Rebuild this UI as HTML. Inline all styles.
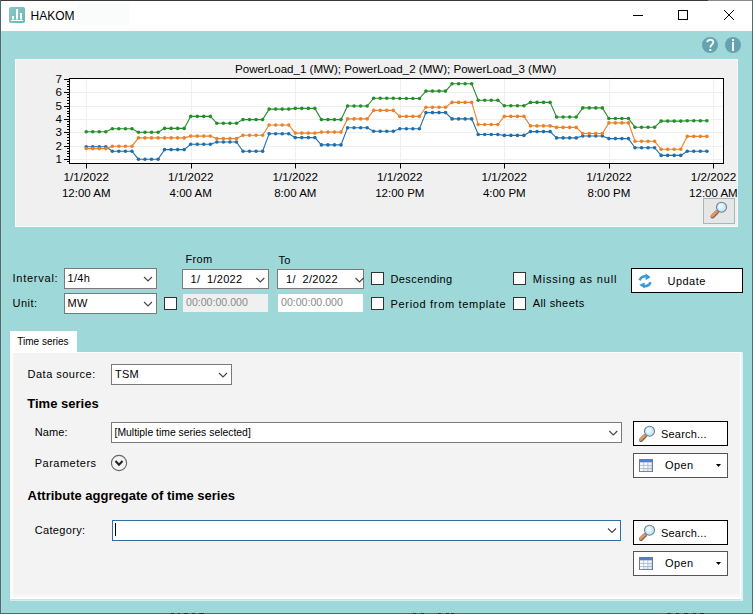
<!DOCTYPE html>
<html><head><meta charset="utf-8"><style>
html,body{margin:0;padding:0;width:753px;height:614px;overflow:hidden;background:#9fd8d8}
svg{position:absolute;left:0;top:0;font-family:"Liberation Sans",sans-serif} text{white-space:pre}
</style></head><body>
<svg width="753" height="614" viewBox="0 0 753 614">
<!-- body teal -->
<rect x="0" y="0" width="753" height="614" fill="#9fd8d8"/>
<!-- title bar -->
<rect x="0" y="0" width="753" height="31" fill="#fff"/>
<rect x="0" y="0" width="708" height="1" fill="#3a3a3a"/>
<rect x="708" y="0" width="45" height="1" fill="#8a8a8a"/>
<rect x="0" y="0" width="1" height="614" fill="#4a6a6e"/>
<rect x="1" y="31" width="1" height="582" fill="#acdcdc"/>
<rect x="752" y="0" width="1" height="614" fill="#5a6b6b"/>
<rect x="0" y="613" width="753" height="1" fill="#4a6868"/>
<g fill="#1a2a2a"><rect x="171" y="613" width="3" height="1"/><rect x="178" y="613" width="2" height="1"/><rect x="184" y="613" width="4" height="1"/><rect x="192" y="613" width="3" height="1"/><rect x="199" y="613" width="5" height="1"/>
<rect x="413" y="613" width="3" height="1"/><rect x="421" y="613" width="3" height="1"/><rect x="438" y="613" width="3" height="1"/><rect x="446" y="613" width="3" height="1"/><rect x="451" y="613" width="3" height="1"/>
<rect x="667" y="613" width="4" height="1"/><rect x="676" y="613" width="3" height="1"/><rect x="684" y="613" width="4" height="1"/><rect x="693" y="613" width="3" height="1"/><rect x="700" y="613" width="4" height="1"/></g>
<!-- app icon -->
<defs><linearGradient id="ig" x1="0" y1="0" x2="1" y2="1"><stop offset="0" stop-color="#8cc8c8"/><stop offset="1" stop-color="#6db5b5"/></linearGradient></defs>
<rect x="9" y="7" width="16" height="16" rx="2" fill="url(#ig)"/>
<rect x="12" y="16" width="2" height="3.5" fill="#fff"/>
<rect x="16" y="9" width="2" height="10.5" fill="#fff"/>
<rect x="20" y="13" width="2" height="6.5" fill="#fff"/>
<rect x="11" y="20" width="12" height="1" fill="#fff"/>
<rect x="77" y="3" width="52" height="22" fill="#fafbfb"/>
<text x="30.5" y="19.7" font-size="12" fill="#000">HAKOM</text>
<!-- window controls -->
<rect x="633" y="15" width="10" height="1" fill="#000"/>
<rect x="678.5" y="10.5" width="9" height="9" fill="none" stroke="#000" stroke-width="1"/>
<path d="M724,10 L734,20 M734,10 L724,20" stroke="#000" stroke-width="1"/>
<!-- help / info -->
<circle cx="710" cy="45" r="8" fill="#64a2b0"/>
<path d="M707.3,42.3 C707.3,38.9 713.3,38.9 713.3,42.3 C713.3,44.6 710.3,44.6 710.3,47.6" fill="none" stroke="#eef8fb" stroke-width="1.9"/>
<rect x="709.3" y="49" width="2" height="2" fill="#eef8fb"/>
<circle cx="733" cy="45" r="8" fill="#64a2b0"/>
<rect x="732" y="39" width="2" height="2" fill="#eef8fb"/>
<rect x="732" y="42" width="2" height="9" fill="#eef8fb"/>
<!-- chart panel -->
<rect x="15" y="59" width="723" height="168" fill="#f8fbfb"/>
<rect x="16" y="60" width="721" height="166" fill="#f0f0f0"/>
<text x="235" y="73" font-size="11.57" fill="#000">PowerLoad_1 (MW); PowerLoad_2 (MW); PowerLoad_3 (MW)</text>
<rect x="70" y="79" width="653" height="84" fill="#fff"/>
<line x1="70" x2="723" y1="159.5" y2="159.5" stroke="#efefef" stroke-width="1"/>
<line x1="70" x2="723" y1="146.5" y2="146.5" stroke="#efefef" stroke-width="1"/>
<line x1="70" x2="723" y1="132.5" y2="132.5" stroke="#efefef" stroke-width="1"/>
<line x1="70" x2="723" y1="119.5" y2="119.5" stroke="#efefef" stroke-width="1"/>
<line x1="70" x2="723" y1="106.5" y2="106.5" stroke="#efefef" stroke-width="1"/>
<line x1="70" x2="723" y1="92.5" y2="92.5" stroke="#efefef" stroke-width="1"/>
<line x1="86.5" x2="86.5" y1="79" y2="163" stroke="#efefef" stroke-width="1"/>
<line x1="191.5" x2="191.5" y1="79" y2="163" stroke="#efefef" stroke-width="1"/>
<line x1="295.5" x2="295.5" y1="79" y2="163" stroke="#efefef" stroke-width="1"/>
<line x1="400.5" x2="400.5" y1="79" y2="163" stroke="#efefef" stroke-width="1"/>
<line x1="504.5" x2="504.5" y1="79" y2="163" stroke="#efefef" stroke-width="1"/>
<line x1="609.5" x2="609.5" y1="79" y2="163" stroke="#efefef" stroke-width="1"/>
<line x1="713.5" x2="713.5" y1="79" y2="163" stroke="#efefef" stroke-width="1"/>
<path d="M86.20,146.70 L92.73,146.70 L99.27,146.70 L105.80,146.70 L112.33,151.30 L118.87,151.30 L125.40,151.30 L131.93,151.30 L138.47,159.20 L145.00,159.20 L151.53,159.20 L158.07,159.20 L164.60,149.60 L171.13,149.60 L177.67,149.60 L184.20,149.60 L190.73,144.20 L197.27,144.20 L203.80,144.20 L210.33,144.20 L216.87,142.00 L223.40,142.00 L229.93,142.00 L236.47,142.00 L243.00,151.30 L249.53,151.30 L256.07,151.30 L262.60,151.30 L269.13,133.80 L275.67,133.80 L282.20,133.80 L288.73,133.80 L295.27,137.60 L301.80,137.60 L308.33,137.60 L314.87,137.60 L321.40,144.90 L327.93,144.90 L334.47,144.90 L341.00,144.90 L347.53,127.70 L354.07,127.70 L360.60,127.70 L367.13,127.70 L373.67,131.30 L380.20,131.30 L386.73,131.30 L393.27,131.30 L399.80,128.80 L406.33,128.80 L412.87,128.80 L419.40,128.80 L425.93,112.60 L432.47,112.60 L439.00,112.60 L445.53,112.60 L452.07,118.90 L458.60,118.90 L465.13,118.90 L471.67,118.90 L478.20,134.50 L484.73,134.50 L491.27,134.50 L497.80,134.50 L504.33,135.40 L510.87,135.40 L517.40,135.40 L523.93,135.40 L530.47,131.60 L537.00,131.60 L543.53,131.60 L550.07,131.60 L556.60,137.90 L563.13,137.90 L569.67,137.90 L576.20,137.90 L582.73,136.00 L589.27,136.00 L595.80,136.00 L602.33,136.00 L608.87,138.60 L615.40,138.60 L621.93,138.60 L628.47,138.60 L635.00,147.70 L641.53,147.70 L648.07,147.70 L654.60,147.70 L661.13,155.40 L667.67,155.40 L674.20,155.40 L680.73,155.40 L687.27,151.30 L693.80,151.30 L700.33,151.30 L706.87,151.30" fill="none" stroke="#1f6fad" stroke-width="1.1"/><circle cx="86.20" cy="146.70" r="1.8" fill="#1f6fad"/><circle cx="92.73" cy="146.70" r="1.8" fill="#1f6fad"/><circle cx="99.27" cy="146.70" r="1.8" fill="#1f6fad"/><circle cx="105.80" cy="146.70" r="1.8" fill="#1f6fad"/><circle cx="112.33" cy="151.30" r="1.8" fill="#1f6fad"/><circle cx="118.87" cy="151.30" r="1.8" fill="#1f6fad"/><circle cx="125.40" cy="151.30" r="1.8" fill="#1f6fad"/><circle cx="131.93" cy="151.30" r="1.8" fill="#1f6fad"/><circle cx="138.47" cy="159.20" r="1.8" fill="#1f6fad"/><circle cx="145.00" cy="159.20" r="1.8" fill="#1f6fad"/><circle cx="151.53" cy="159.20" r="1.8" fill="#1f6fad"/><circle cx="158.07" cy="159.20" r="1.8" fill="#1f6fad"/><circle cx="164.60" cy="149.60" r="1.8" fill="#1f6fad"/><circle cx="171.13" cy="149.60" r="1.8" fill="#1f6fad"/><circle cx="177.67" cy="149.60" r="1.8" fill="#1f6fad"/><circle cx="184.20" cy="149.60" r="1.8" fill="#1f6fad"/><circle cx="190.73" cy="144.20" r="1.8" fill="#1f6fad"/><circle cx="197.27" cy="144.20" r="1.8" fill="#1f6fad"/><circle cx="203.80" cy="144.20" r="1.8" fill="#1f6fad"/><circle cx="210.33" cy="144.20" r="1.8" fill="#1f6fad"/><circle cx="216.87" cy="142.00" r="1.8" fill="#1f6fad"/><circle cx="223.40" cy="142.00" r="1.8" fill="#1f6fad"/><circle cx="229.93" cy="142.00" r="1.8" fill="#1f6fad"/><circle cx="236.47" cy="142.00" r="1.8" fill="#1f6fad"/><circle cx="243.00" cy="151.30" r="1.8" fill="#1f6fad"/><circle cx="249.53" cy="151.30" r="1.8" fill="#1f6fad"/><circle cx="256.07" cy="151.30" r="1.8" fill="#1f6fad"/><circle cx="262.60" cy="151.30" r="1.8" fill="#1f6fad"/><circle cx="269.13" cy="133.80" r="1.8" fill="#1f6fad"/><circle cx="275.67" cy="133.80" r="1.8" fill="#1f6fad"/><circle cx="282.20" cy="133.80" r="1.8" fill="#1f6fad"/><circle cx="288.73" cy="133.80" r="1.8" fill="#1f6fad"/><circle cx="295.27" cy="137.60" r="1.8" fill="#1f6fad"/><circle cx="301.80" cy="137.60" r="1.8" fill="#1f6fad"/><circle cx="308.33" cy="137.60" r="1.8" fill="#1f6fad"/><circle cx="314.87" cy="137.60" r="1.8" fill="#1f6fad"/><circle cx="321.40" cy="144.90" r="1.8" fill="#1f6fad"/><circle cx="327.93" cy="144.90" r="1.8" fill="#1f6fad"/><circle cx="334.47" cy="144.90" r="1.8" fill="#1f6fad"/><circle cx="341.00" cy="144.90" r="1.8" fill="#1f6fad"/><circle cx="347.53" cy="127.70" r="1.8" fill="#1f6fad"/><circle cx="354.07" cy="127.70" r="1.8" fill="#1f6fad"/><circle cx="360.60" cy="127.70" r="1.8" fill="#1f6fad"/><circle cx="367.13" cy="127.70" r="1.8" fill="#1f6fad"/><circle cx="373.67" cy="131.30" r="1.8" fill="#1f6fad"/><circle cx="380.20" cy="131.30" r="1.8" fill="#1f6fad"/><circle cx="386.73" cy="131.30" r="1.8" fill="#1f6fad"/><circle cx="393.27" cy="131.30" r="1.8" fill="#1f6fad"/><circle cx="399.80" cy="128.80" r="1.8" fill="#1f6fad"/><circle cx="406.33" cy="128.80" r="1.8" fill="#1f6fad"/><circle cx="412.87" cy="128.80" r="1.8" fill="#1f6fad"/><circle cx="419.40" cy="128.80" r="1.8" fill="#1f6fad"/><circle cx="425.93" cy="112.60" r="1.8" fill="#1f6fad"/><circle cx="432.47" cy="112.60" r="1.8" fill="#1f6fad"/><circle cx="439.00" cy="112.60" r="1.8" fill="#1f6fad"/><circle cx="445.53" cy="112.60" r="1.8" fill="#1f6fad"/><circle cx="452.07" cy="118.90" r="1.8" fill="#1f6fad"/><circle cx="458.60" cy="118.90" r="1.8" fill="#1f6fad"/><circle cx="465.13" cy="118.90" r="1.8" fill="#1f6fad"/><circle cx="471.67" cy="118.90" r="1.8" fill="#1f6fad"/><circle cx="478.20" cy="134.50" r="1.8" fill="#1f6fad"/><circle cx="484.73" cy="134.50" r="1.8" fill="#1f6fad"/><circle cx="491.27" cy="134.50" r="1.8" fill="#1f6fad"/><circle cx="497.80" cy="134.50" r="1.8" fill="#1f6fad"/><circle cx="504.33" cy="135.40" r="1.8" fill="#1f6fad"/><circle cx="510.87" cy="135.40" r="1.8" fill="#1f6fad"/><circle cx="517.40" cy="135.40" r="1.8" fill="#1f6fad"/><circle cx="523.93" cy="135.40" r="1.8" fill="#1f6fad"/><circle cx="530.47" cy="131.60" r="1.8" fill="#1f6fad"/><circle cx="537.00" cy="131.60" r="1.8" fill="#1f6fad"/><circle cx="543.53" cy="131.60" r="1.8" fill="#1f6fad"/><circle cx="550.07" cy="131.60" r="1.8" fill="#1f6fad"/><circle cx="556.60" cy="137.90" r="1.8" fill="#1f6fad"/><circle cx="563.13" cy="137.90" r="1.8" fill="#1f6fad"/><circle cx="569.67" cy="137.90" r="1.8" fill="#1f6fad"/><circle cx="576.20" cy="137.90" r="1.8" fill="#1f6fad"/><circle cx="582.73" cy="136.00" r="1.8" fill="#1f6fad"/><circle cx="589.27" cy="136.00" r="1.8" fill="#1f6fad"/><circle cx="595.80" cy="136.00" r="1.8" fill="#1f6fad"/><circle cx="602.33" cy="136.00" r="1.8" fill="#1f6fad"/><circle cx="608.87" cy="138.60" r="1.8" fill="#1f6fad"/><circle cx="615.40" cy="138.60" r="1.8" fill="#1f6fad"/><circle cx="621.93" cy="138.60" r="1.8" fill="#1f6fad"/><circle cx="628.47" cy="138.60" r="1.8" fill="#1f6fad"/><circle cx="635.00" cy="147.70" r="1.8" fill="#1f6fad"/><circle cx="641.53" cy="147.70" r="1.8" fill="#1f6fad"/><circle cx="648.07" cy="147.70" r="1.8" fill="#1f6fad"/><circle cx="654.60" cy="147.70" r="1.8" fill="#1f6fad"/><circle cx="661.13" cy="155.40" r="1.8" fill="#1f6fad"/><circle cx="667.67" cy="155.40" r="1.8" fill="#1f6fad"/><circle cx="674.20" cy="155.40" r="1.8" fill="#1f6fad"/><circle cx="680.73" cy="155.40" r="1.8" fill="#1f6fad"/><circle cx="687.27" cy="151.30" r="1.8" fill="#1f6fad"/><circle cx="693.80" cy="151.30" r="1.8" fill="#1f6fad"/><circle cx="700.33" cy="151.30" r="1.8" fill="#1f6fad"/><circle cx="706.87" cy="151.30" r="1.8" fill="#1f6fad"/>
<path d="M86.20,148.60 L92.73,148.60 L99.27,148.60 L105.80,148.60 L112.33,146.20 L118.87,146.20 L125.40,146.20 L131.93,146.20 L138.47,137.90 L145.00,137.90 L151.53,137.90 L158.07,137.90 L164.60,137.90 L171.13,137.90 L177.67,137.90 L184.20,137.90 L190.73,136.10 L197.27,136.10 L203.80,136.10 L210.33,136.10 L216.87,138.60 L223.40,138.60 L229.93,138.60 L236.47,138.60 L243.00,135.30 L249.53,135.30 L256.07,135.30 L262.60,135.30 L269.13,125.00 L275.67,125.00 L282.20,125.00 L288.73,125.00 L295.27,133.10 L301.80,133.10 L308.33,133.10 L314.87,133.10 L321.40,132.10 L327.93,132.10 L334.47,132.10 L341.00,132.10 L347.53,118.90 L354.07,118.90 L360.60,118.90 L367.13,118.90 L373.67,110.40 L380.20,110.40 L386.73,110.40 L393.27,110.40 L399.80,116.40 L406.33,116.40 L412.87,116.40 L419.40,116.40 L425.93,107.20 L432.47,107.20 L439.00,107.20 L445.53,107.20 L452.07,102.40 L458.60,102.40 L465.13,102.40 L471.67,102.40 L478.20,124.50 L484.73,124.50 L491.27,124.50 L497.80,124.50 L504.33,116.40 L510.87,116.40 L517.40,116.40 L523.93,116.40 L530.47,125.90 L537.00,125.90 L543.53,125.90 L550.07,125.90 L556.60,127.40 L563.13,127.40 L569.67,127.40 L576.20,127.40 L582.73,133.50 L589.27,133.50 L595.80,133.50 L602.33,133.50 L608.87,122.90 L615.40,122.90 L621.93,122.90 L628.47,122.90 L635.00,141.30 L641.53,141.30 L648.07,141.30 L654.60,141.30 L661.13,149.30 L667.67,149.30 L674.20,149.30 L680.73,149.30 L687.27,136.40 L693.80,136.40 L700.33,136.40 L706.87,136.40" fill="none" stroke="#ea822a" stroke-width="1.1"/><circle cx="86.20" cy="148.60" r="1.8" fill="#ea822a"/><circle cx="92.73" cy="148.60" r="1.8" fill="#ea822a"/><circle cx="99.27" cy="148.60" r="1.8" fill="#ea822a"/><circle cx="105.80" cy="148.60" r="1.8" fill="#ea822a"/><circle cx="112.33" cy="146.20" r="1.8" fill="#ea822a"/><circle cx="118.87" cy="146.20" r="1.8" fill="#ea822a"/><circle cx="125.40" cy="146.20" r="1.8" fill="#ea822a"/><circle cx="131.93" cy="146.20" r="1.8" fill="#ea822a"/><circle cx="138.47" cy="137.90" r="1.8" fill="#ea822a"/><circle cx="145.00" cy="137.90" r="1.8" fill="#ea822a"/><circle cx="151.53" cy="137.90" r="1.8" fill="#ea822a"/><circle cx="158.07" cy="137.90" r="1.8" fill="#ea822a"/><circle cx="164.60" cy="137.90" r="1.8" fill="#ea822a"/><circle cx="171.13" cy="137.90" r="1.8" fill="#ea822a"/><circle cx="177.67" cy="137.90" r="1.8" fill="#ea822a"/><circle cx="184.20" cy="137.90" r="1.8" fill="#ea822a"/><circle cx="190.73" cy="136.10" r="1.8" fill="#ea822a"/><circle cx="197.27" cy="136.10" r="1.8" fill="#ea822a"/><circle cx="203.80" cy="136.10" r="1.8" fill="#ea822a"/><circle cx="210.33" cy="136.10" r="1.8" fill="#ea822a"/><circle cx="216.87" cy="138.60" r="1.8" fill="#ea822a"/><circle cx="223.40" cy="138.60" r="1.8" fill="#ea822a"/><circle cx="229.93" cy="138.60" r="1.8" fill="#ea822a"/><circle cx="236.47" cy="138.60" r="1.8" fill="#ea822a"/><circle cx="243.00" cy="135.30" r="1.8" fill="#ea822a"/><circle cx="249.53" cy="135.30" r="1.8" fill="#ea822a"/><circle cx="256.07" cy="135.30" r="1.8" fill="#ea822a"/><circle cx="262.60" cy="135.30" r="1.8" fill="#ea822a"/><circle cx="269.13" cy="125.00" r="1.8" fill="#ea822a"/><circle cx="275.67" cy="125.00" r="1.8" fill="#ea822a"/><circle cx="282.20" cy="125.00" r="1.8" fill="#ea822a"/><circle cx="288.73" cy="125.00" r="1.8" fill="#ea822a"/><circle cx="295.27" cy="133.10" r="1.8" fill="#ea822a"/><circle cx="301.80" cy="133.10" r="1.8" fill="#ea822a"/><circle cx="308.33" cy="133.10" r="1.8" fill="#ea822a"/><circle cx="314.87" cy="133.10" r="1.8" fill="#ea822a"/><circle cx="321.40" cy="132.10" r="1.8" fill="#ea822a"/><circle cx="327.93" cy="132.10" r="1.8" fill="#ea822a"/><circle cx="334.47" cy="132.10" r="1.8" fill="#ea822a"/><circle cx="341.00" cy="132.10" r="1.8" fill="#ea822a"/><circle cx="347.53" cy="118.90" r="1.8" fill="#ea822a"/><circle cx="354.07" cy="118.90" r="1.8" fill="#ea822a"/><circle cx="360.60" cy="118.90" r="1.8" fill="#ea822a"/><circle cx="367.13" cy="118.90" r="1.8" fill="#ea822a"/><circle cx="373.67" cy="110.40" r="1.8" fill="#ea822a"/><circle cx="380.20" cy="110.40" r="1.8" fill="#ea822a"/><circle cx="386.73" cy="110.40" r="1.8" fill="#ea822a"/><circle cx="393.27" cy="110.40" r="1.8" fill="#ea822a"/><circle cx="399.80" cy="116.40" r="1.8" fill="#ea822a"/><circle cx="406.33" cy="116.40" r="1.8" fill="#ea822a"/><circle cx="412.87" cy="116.40" r="1.8" fill="#ea822a"/><circle cx="419.40" cy="116.40" r="1.8" fill="#ea822a"/><circle cx="425.93" cy="107.20" r="1.8" fill="#ea822a"/><circle cx="432.47" cy="107.20" r="1.8" fill="#ea822a"/><circle cx="439.00" cy="107.20" r="1.8" fill="#ea822a"/><circle cx="445.53" cy="107.20" r="1.8" fill="#ea822a"/><circle cx="452.07" cy="102.40" r="1.8" fill="#ea822a"/><circle cx="458.60" cy="102.40" r="1.8" fill="#ea822a"/><circle cx="465.13" cy="102.40" r="1.8" fill="#ea822a"/><circle cx="471.67" cy="102.40" r="1.8" fill="#ea822a"/><circle cx="478.20" cy="124.50" r="1.8" fill="#ea822a"/><circle cx="484.73" cy="124.50" r="1.8" fill="#ea822a"/><circle cx="491.27" cy="124.50" r="1.8" fill="#ea822a"/><circle cx="497.80" cy="124.50" r="1.8" fill="#ea822a"/><circle cx="504.33" cy="116.40" r="1.8" fill="#ea822a"/><circle cx="510.87" cy="116.40" r="1.8" fill="#ea822a"/><circle cx="517.40" cy="116.40" r="1.8" fill="#ea822a"/><circle cx="523.93" cy="116.40" r="1.8" fill="#ea822a"/><circle cx="530.47" cy="125.90" r="1.8" fill="#ea822a"/><circle cx="537.00" cy="125.90" r="1.8" fill="#ea822a"/><circle cx="543.53" cy="125.90" r="1.8" fill="#ea822a"/><circle cx="550.07" cy="125.90" r="1.8" fill="#ea822a"/><circle cx="556.60" cy="127.40" r="1.8" fill="#ea822a"/><circle cx="563.13" cy="127.40" r="1.8" fill="#ea822a"/><circle cx="569.67" cy="127.40" r="1.8" fill="#ea822a"/><circle cx="576.20" cy="127.40" r="1.8" fill="#ea822a"/><circle cx="582.73" cy="133.50" r="1.8" fill="#ea822a"/><circle cx="589.27" cy="133.50" r="1.8" fill="#ea822a"/><circle cx="595.80" cy="133.50" r="1.8" fill="#ea822a"/><circle cx="602.33" cy="133.50" r="1.8" fill="#ea822a"/><circle cx="608.87" cy="122.90" r="1.8" fill="#ea822a"/><circle cx="615.40" cy="122.90" r="1.8" fill="#ea822a"/><circle cx="621.93" cy="122.90" r="1.8" fill="#ea822a"/><circle cx="628.47" cy="122.90" r="1.8" fill="#ea822a"/><circle cx="635.00" cy="141.30" r="1.8" fill="#ea822a"/><circle cx="641.53" cy="141.30" r="1.8" fill="#ea822a"/><circle cx="648.07" cy="141.30" r="1.8" fill="#ea822a"/><circle cx="654.60" cy="141.30" r="1.8" fill="#ea822a"/><circle cx="661.13" cy="149.30" r="1.8" fill="#ea822a"/><circle cx="667.67" cy="149.30" r="1.8" fill="#ea822a"/><circle cx="674.20" cy="149.30" r="1.8" fill="#ea822a"/><circle cx="680.73" cy="149.30" r="1.8" fill="#ea822a"/><circle cx="687.27" cy="136.40" r="1.8" fill="#ea822a"/><circle cx="693.80" cy="136.40" r="1.8" fill="#ea822a"/><circle cx="700.33" cy="136.40" r="1.8" fill="#ea822a"/><circle cx="706.87" cy="136.40" r="1.8" fill="#ea822a"/>
<path d="M86.20,131.80 L92.73,131.80 L99.27,131.80 L105.80,131.80 L112.33,128.70 L118.87,128.70 L125.40,128.70 L131.93,128.70 L138.47,132.30 L145.00,132.30 L151.53,132.30 L158.07,132.30 L164.60,128.40 L171.13,128.40 L177.67,128.40 L184.20,128.40 L190.73,116.40 L197.27,116.40 L203.80,116.40 L210.33,116.40 L216.87,123.30 L223.40,123.30 L229.93,123.30 L236.47,123.30 L243.00,119.60 L249.53,119.60 L256.07,119.60 L262.60,119.60 L269.13,109.10 L275.67,109.10 L282.20,109.10 L288.73,109.10 L295.27,108.40 L301.80,108.40 L308.33,108.40 L314.87,108.40 L321.40,119.60 L327.93,119.60 L334.47,119.60 L341.00,119.60 L347.53,106.00 L354.07,106.00 L360.60,106.00 L367.13,106.00 L373.67,98.20 L380.20,98.20 L386.73,98.20 L393.27,98.20 L399.80,98.50 L406.33,98.50 L412.87,98.50 L419.40,98.50 L425.93,91.10 L432.47,91.10 L439.00,91.10 L445.53,91.10 L452.07,83.80 L458.60,83.80 L465.13,83.80 L471.67,83.80 L478.20,100.20 L484.73,100.20 L491.27,100.20 L497.80,100.20 L504.33,105.80 L510.87,105.80 L517.40,105.80 L523.93,105.80 L530.47,102.40 L537.00,102.40 L543.53,102.40 L550.07,102.40 L556.60,117.00 L563.13,117.00 L569.67,117.00 L576.20,117.00 L582.73,107.90 L589.27,107.90 L595.80,107.90 L602.33,107.90 L608.87,118.50 L615.40,118.50 L621.93,118.50 L628.47,118.50 L635.00,127.20 L641.53,127.20 L648.07,127.20 L654.60,127.20 L661.13,121.10 L667.67,121.10 L674.20,121.10 L680.73,121.10 L687.27,120.80 L693.80,120.80 L700.33,120.80 L706.87,120.80" fill="none" stroke="#248f2a" stroke-width="1.1"/><circle cx="86.20" cy="131.80" r="1.8" fill="#248f2a"/><circle cx="92.73" cy="131.80" r="1.8" fill="#248f2a"/><circle cx="99.27" cy="131.80" r="1.8" fill="#248f2a"/><circle cx="105.80" cy="131.80" r="1.8" fill="#248f2a"/><circle cx="112.33" cy="128.70" r="1.8" fill="#248f2a"/><circle cx="118.87" cy="128.70" r="1.8" fill="#248f2a"/><circle cx="125.40" cy="128.70" r="1.8" fill="#248f2a"/><circle cx="131.93" cy="128.70" r="1.8" fill="#248f2a"/><circle cx="138.47" cy="132.30" r="1.8" fill="#248f2a"/><circle cx="145.00" cy="132.30" r="1.8" fill="#248f2a"/><circle cx="151.53" cy="132.30" r="1.8" fill="#248f2a"/><circle cx="158.07" cy="132.30" r="1.8" fill="#248f2a"/><circle cx="164.60" cy="128.40" r="1.8" fill="#248f2a"/><circle cx="171.13" cy="128.40" r="1.8" fill="#248f2a"/><circle cx="177.67" cy="128.40" r="1.8" fill="#248f2a"/><circle cx="184.20" cy="128.40" r="1.8" fill="#248f2a"/><circle cx="190.73" cy="116.40" r="1.8" fill="#248f2a"/><circle cx="197.27" cy="116.40" r="1.8" fill="#248f2a"/><circle cx="203.80" cy="116.40" r="1.8" fill="#248f2a"/><circle cx="210.33" cy="116.40" r="1.8" fill="#248f2a"/><circle cx="216.87" cy="123.30" r="1.8" fill="#248f2a"/><circle cx="223.40" cy="123.30" r="1.8" fill="#248f2a"/><circle cx="229.93" cy="123.30" r="1.8" fill="#248f2a"/><circle cx="236.47" cy="123.30" r="1.8" fill="#248f2a"/><circle cx="243.00" cy="119.60" r="1.8" fill="#248f2a"/><circle cx="249.53" cy="119.60" r="1.8" fill="#248f2a"/><circle cx="256.07" cy="119.60" r="1.8" fill="#248f2a"/><circle cx="262.60" cy="119.60" r="1.8" fill="#248f2a"/><circle cx="269.13" cy="109.10" r="1.8" fill="#248f2a"/><circle cx="275.67" cy="109.10" r="1.8" fill="#248f2a"/><circle cx="282.20" cy="109.10" r="1.8" fill="#248f2a"/><circle cx="288.73" cy="109.10" r="1.8" fill="#248f2a"/><circle cx="295.27" cy="108.40" r="1.8" fill="#248f2a"/><circle cx="301.80" cy="108.40" r="1.8" fill="#248f2a"/><circle cx="308.33" cy="108.40" r="1.8" fill="#248f2a"/><circle cx="314.87" cy="108.40" r="1.8" fill="#248f2a"/><circle cx="321.40" cy="119.60" r="1.8" fill="#248f2a"/><circle cx="327.93" cy="119.60" r="1.8" fill="#248f2a"/><circle cx="334.47" cy="119.60" r="1.8" fill="#248f2a"/><circle cx="341.00" cy="119.60" r="1.8" fill="#248f2a"/><circle cx="347.53" cy="106.00" r="1.8" fill="#248f2a"/><circle cx="354.07" cy="106.00" r="1.8" fill="#248f2a"/><circle cx="360.60" cy="106.00" r="1.8" fill="#248f2a"/><circle cx="367.13" cy="106.00" r="1.8" fill="#248f2a"/><circle cx="373.67" cy="98.20" r="1.8" fill="#248f2a"/><circle cx="380.20" cy="98.20" r="1.8" fill="#248f2a"/><circle cx="386.73" cy="98.20" r="1.8" fill="#248f2a"/><circle cx="393.27" cy="98.20" r="1.8" fill="#248f2a"/><circle cx="399.80" cy="98.50" r="1.8" fill="#248f2a"/><circle cx="406.33" cy="98.50" r="1.8" fill="#248f2a"/><circle cx="412.87" cy="98.50" r="1.8" fill="#248f2a"/><circle cx="419.40" cy="98.50" r="1.8" fill="#248f2a"/><circle cx="425.93" cy="91.10" r="1.8" fill="#248f2a"/><circle cx="432.47" cy="91.10" r="1.8" fill="#248f2a"/><circle cx="439.00" cy="91.10" r="1.8" fill="#248f2a"/><circle cx="445.53" cy="91.10" r="1.8" fill="#248f2a"/><circle cx="452.07" cy="83.80" r="1.8" fill="#248f2a"/><circle cx="458.60" cy="83.80" r="1.8" fill="#248f2a"/><circle cx="465.13" cy="83.80" r="1.8" fill="#248f2a"/><circle cx="471.67" cy="83.80" r="1.8" fill="#248f2a"/><circle cx="478.20" cy="100.20" r="1.8" fill="#248f2a"/><circle cx="484.73" cy="100.20" r="1.8" fill="#248f2a"/><circle cx="491.27" cy="100.20" r="1.8" fill="#248f2a"/><circle cx="497.80" cy="100.20" r="1.8" fill="#248f2a"/><circle cx="504.33" cy="105.80" r="1.8" fill="#248f2a"/><circle cx="510.87" cy="105.80" r="1.8" fill="#248f2a"/><circle cx="517.40" cy="105.80" r="1.8" fill="#248f2a"/><circle cx="523.93" cy="105.80" r="1.8" fill="#248f2a"/><circle cx="530.47" cy="102.40" r="1.8" fill="#248f2a"/><circle cx="537.00" cy="102.40" r="1.8" fill="#248f2a"/><circle cx="543.53" cy="102.40" r="1.8" fill="#248f2a"/><circle cx="550.07" cy="102.40" r="1.8" fill="#248f2a"/><circle cx="556.60" cy="117.00" r="1.8" fill="#248f2a"/><circle cx="563.13" cy="117.00" r="1.8" fill="#248f2a"/><circle cx="569.67" cy="117.00" r="1.8" fill="#248f2a"/><circle cx="576.20" cy="117.00" r="1.8" fill="#248f2a"/><circle cx="582.73" cy="107.90" r="1.8" fill="#248f2a"/><circle cx="589.27" cy="107.90" r="1.8" fill="#248f2a"/><circle cx="595.80" cy="107.90" r="1.8" fill="#248f2a"/><circle cx="602.33" cy="107.90" r="1.8" fill="#248f2a"/><circle cx="608.87" cy="118.50" r="1.8" fill="#248f2a"/><circle cx="615.40" cy="118.50" r="1.8" fill="#248f2a"/><circle cx="621.93" cy="118.50" r="1.8" fill="#248f2a"/><circle cx="628.47" cy="118.50" r="1.8" fill="#248f2a"/><circle cx="635.00" cy="127.20" r="1.8" fill="#248f2a"/><circle cx="641.53" cy="127.20" r="1.8" fill="#248f2a"/><circle cx="648.07" cy="127.20" r="1.8" fill="#248f2a"/><circle cx="654.60" cy="127.20" r="1.8" fill="#248f2a"/><circle cx="661.13" cy="121.10" r="1.8" fill="#248f2a"/><circle cx="667.67" cy="121.10" r="1.8" fill="#248f2a"/><circle cx="674.20" cy="121.10" r="1.8" fill="#248f2a"/><circle cx="680.73" cy="121.10" r="1.8" fill="#248f2a"/><circle cx="687.27" cy="120.80" r="1.8" fill="#248f2a"/><circle cx="693.80" cy="120.80" r="1.8" fill="#248f2a"/><circle cx="700.33" cy="120.80" r="1.8" fill="#248f2a"/><circle cx="706.87" cy="120.80" r="1.8" fill="#248f2a"/>
<rect x="69.5" y="78.5" width="654" height="85" fill="none" stroke="#000" stroke-width="1"/>
<line x1="64" x2="69" y1="159.5" y2="159.5" stroke="#000" stroke-width="1"/>
<text x="62" y="162.8" text-anchor="end" font-size="11.6">1</text>
<line x1="64" x2="69" y1="146.5" y2="146.5" stroke="#000" stroke-width="1"/>
<text x="62" y="149.8" text-anchor="end" font-size="11.6">2</text>
<line x1="64" x2="69" y1="132.5" y2="132.5" stroke="#000" stroke-width="1"/>
<text x="62" y="135.8" text-anchor="end" font-size="11.6">3</text>
<line x1="64" x2="69" y1="119.5" y2="119.5" stroke="#000" stroke-width="1"/>
<text x="62" y="122.8" text-anchor="end" font-size="11.6">4</text>
<line x1="64" x2="69" y1="106.5" y2="106.5" stroke="#000" stroke-width="1"/>
<text x="62" y="109.8" text-anchor="end" font-size="11.6">5</text>
<line x1="64" x2="69" y1="92.5" y2="92.5" stroke="#000" stroke-width="1"/>
<text x="62" y="95.8" text-anchor="end" font-size="11.6">6</text>
<line x1="64" x2="69" y1="79.5" y2="79.5" stroke="#000" stroke-width="1"/>
<text x="62" y="82.8" text-anchor="end" font-size="11.6">7</text>
<rect x="67" y="161" width="2" height="1" fill="#000"/>
<rect x="67" y="148" width="2" height="1" fill="#000"/>
<rect x="67" y="151" width="2" height="1" fill="#000"/>
<rect x="67" y="153" width="2" height="1" fill="#000"/>
<rect x="67" y="156" width="2" height="1" fill="#000"/>
<rect x="67" y="134" width="2" height="1" fill="#000"/>
<rect x="67" y="137" width="2" height="1" fill="#000"/>
<rect x="67" y="140" width="2" height="1" fill="#000"/>
<rect x="67" y="143" width="2" height="1" fill="#000"/>
<rect x="67" y="121" width="2" height="1" fill="#000"/>
<rect x="67" y="124" width="2" height="1" fill="#000"/>
<rect x="67" y="126" width="2" height="1" fill="#000"/>
<rect x="67" y="129" width="2" height="1" fill="#000"/>
<rect x="67" y="108" width="2" height="1" fill="#000"/>
<rect x="67" y="111" width="2" height="1" fill="#000"/>
<rect x="67" y="113" width="2" height="1" fill="#000"/>
<rect x="67" y="116" width="2" height="1" fill="#000"/>
<rect x="67" y="94" width="2" height="1" fill="#000"/>
<rect x="67" y="97" width="2" height="1" fill="#000"/>
<rect x="67" y="100" width="2" height="1" fill="#000"/>
<rect x="67" y="103" width="2" height="1" fill="#000"/>
<rect x="67" y="81" width="2" height="1" fill="#000"/>
<rect x="67" y="84" width="2" height="1" fill="#000"/>
<rect x="67" y="86" width="2" height="1" fill="#000"/>
<rect x="67" y="89" width="2" height="1" fill="#000"/>
<line x1="86.5" x2="86.5" y1="163" y2="168.5" stroke="#000" stroke-width="1"/>
<text x="86.2" y="180.5" text-anchor="middle" font-size="11.7">1/1/2022</text>
<text x="86.2" y="196.5" text-anchor="middle" font-size="11.5">12:00 AM</text>
<line x1="191.5" x2="191.5" y1="163" y2="168.5" stroke="#000" stroke-width="1"/>
<text x="190.7" y="180.5" text-anchor="middle" font-size="11.7">1/1/2022</text>
<text x="190.7" y="196.5" text-anchor="middle" font-size="11.5">4:00 AM</text>
<line x1="295.5" x2="295.5" y1="163" y2="168.5" stroke="#000" stroke-width="1"/>
<text x="295.3" y="180.5" text-anchor="middle" font-size="11.7">1/1/2022</text>
<text x="295.3" y="196.5" text-anchor="middle" font-size="11.5">8:00 AM</text>
<line x1="400.5" x2="400.5" y1="163" y2="168.5" stroke="#000" stroke-width="1"/>
<text x="399.8" y="180.5" text-anchor="middle" font-size="11.7">1/1/2022</text>
<text x="399.8" y="196.5" text-anchor="middle" font-size="11.5">12:00 PM</text>
<line x1="504.5" x2="504.5" y1="163" y2="168.5" stroke="#000" stroke-width="1"/>
<text x="504.3" y="180.5" text-anchor="middle" font-size="11.7">1/1/2022</text>
<text x="504.3" y="196.5" text-anchor="middle" font-size="11.5">4:00 PM</text>
<line x1="609.5" x2="609.5" y1="163" y2="168.5" stroke="#000" stroke-width="1"/>
<text x="608.9" y="180.5" text-anchor="middle" font-size="11.7">1/1/2022</text>
<text x="608.9" y="196.5" text-anchor="middle" font-size="11.5">8:00 PM</text>
<line x1="713.5" x2="713.5" y1="163" y2="168.5" stroke="#000" stroke-width="1"/>
<text x="713.4" y="180.5" text-anchor="middle" font-size="11.7">1/2/2022</text>
<text x="713.4" y="196.5" text-anchor="middle" font-size="11.5">12:00 AM</text>
<!-- zoom button -->
<rect x="703.5" y="198.5" width="31" height="25" fill="#e6e6e6" stroke="#a8b8b8" stroke-width="1"/>
<line x1="712.5" y1="216.5" x2="717" y2="212" stroke="#7c6458" stroke-width="4" stroke-linecap="round"/><line x1="712.1" y1="216.1" x2="716.6" y2="211.6" stroke="#e8965e" stroke-width="2.6" stroke-linecap="round"/><circle cx="721.5" cy="207.2" r="5.0" fill="#cdeaf8" stroke="#6c7f90" stroke-width="1.1"/><circle cx="720.7" cy="206.39999999999998" r="2.5" fill="#e6f7ff"/>
<!-- controls -->
<text x="12.5" y="282.4" font-size="11" letter-spacing="0.75" fill="#000">Interval:</text>
<text x="12.5" y="307.2" font-size="11" letter-spacing="0.5" fill="#000">Unit:</text>
<rect x="64.5" y="268.5" width="92" height="20" fill="#fff" stroke="#7a7a7a" stroke-width="1"/><text x="67.5" y="281.6" font-size="11" letter-spacing="0.3" fill="#000">1/4h</text><path d="M144,277 L148.0,281 L152,277" fill="none" stroke="#444" stroke-width="1.1"/>
<rect x="64.5" y="293.5" width="92" height="20" fill="#fff" stroke="#7a7a7a" stroke-width="1"/><text x="67.5" y="306.5" font-size="11" letter-spacing="0.3" fill="#000">MW</text><path d="M144,302 L148.0,306 L152,302" fill="none" stroke="#444" stroke-width="1.1"/>
<rect x="164.5" y="297.5" width="12" height="12" fill="#fff" stroke="#333" stroke-width="1"/>
<text x="185.5" y="262.8" font-size="11" letter-spacing="0.3" fill="#000">From</text>
<text x="278.5" y="263.7" font-size="11" letter-spacing="0.3" fill="#000">To</text>
<rect x="182.5" y="269.5" width="86" height="19" fill="#fff" stroke="#7a7a7a" stroke-width="1"/><text x="190.5" y="282.5" font-size="11" letter-spacing="0.3" fill="#000">1/  1/2022</text><path d="M256.3,278 L260.3,282 L264.3,278" fill="none" stroke="#444" stroke-width="1.1"/>
<rect x="277.5" y="269.5" width="86" height="19" fill="#fff" stroke="#7a7a7a" stroke-width="1"/><text x="286" y="282.5" font-size="11" letter-spacing="0.3" fill="#000">1/  2/2022</text><path d="M355.5,278 L359.5,282 L363.5,278" fill="none" stroke="#444" stroke-width="1.1"/>
<rect x="183" y="294" width="85" height="18" fill="#f0f0f0"/>
<text x="186" y="306.4" font-size="10.6" fill="#8a8a8a">00:00:00.000</text>
<rect x="278" y="294" width="85" height="18" fill="#fff"/>
<text x="281" y="306.4" font-size="10.6" fill="#8a8a8a">00:00:00.000</text>
<rect x="371.5" y="272.5" width="12" height="12" fill="#fff" stroke="#333" stroke-width="1"/>
<rect x="371.5" y="297.5" width="12" height="12" fill="#fff" stroke="#333" stroke-width="1"/>
<text x="390.5" y="282.9" font-size="11" letter-spacing="0.4" fill="#000">Descending</text>
<text x="390.5" y="307.8" font-size="11" letter-spacing="0.68" fill="#000">Period from template</text>
<rect x="513.5" y="272.5" width="12" height="12" fill="#fff" stroke="#333" stroke-width="1"/>
<rect x="513.5" y="297.5" width="12" height="12" fill="#fff" stroke="#333" stroke-width="1"/>
<text x="532.7" y="283" font-size="11" letter-spacing="0.83" fill="#000">Missing as null</text>
<text x="532.7" y="307.4" font-size="11" letter-spacing="0.42" fill="#000">All sheets</text>
<!-- update button -->
<rect x="631.5" y="268.5" width="111" height="24" fill="#fff" stroke="#000" stroke-width="1"/>
<path d="M639.6,280.2 Q641.5,275.8 646.3,276.3" fill="none" stroke="#3c9ad8" stroke-width="2.6"/>
<path d="M645.6,273.2 L650.6,277.2 L645.6,280.2 Z" fill="#3c9ad8"/>
<path d="M650.6,282.2 Q648.7,286.6 643.9,286.1" fill="none" stroke="#3c9ad8" stroke-width="2.6"/>
<path d="M644.6,282.6 L639.4,284.8 L644.6,288.6 Z" fill="#3c9ad8"/>
<text x="667.5" y="285" font-size="11" letter-spacing="0.46" fill="#000">Update</text>
<!-- tab -->
<rect x="10" y="331" width="67" height="22" fill="#fff"/>
<rect x="10" y="352" width="731" height="247" fill="#fff"/>
<rect x="10" y="599" width="732" height="1" fill="#d9dede"/>
<rect x="741" y="352" width="1" height="248" fill="#e8f3f5"/>
<rect x="10" y="600" width="733" height="1" fill="#d4eeee"/>
<rect x="742" y="352" width="1" height="249" fill="#dcf4f4"/>
<rect x="13" y="353" width="727" height="244" fill="#f7f7f6"/>
<rect x="13" y="353" width="727" height="241" fill="#f3f3f3"/>
<text x="17.3" y="344.9" font-size="10" fill="#000">Time series</text>
<text x="27.6" y="377.5" font-size="11" letter-spacing="0.48" fill="#000">Data source:</text>
<rect x="111.5" y="364.5" width="120" height="20" fill="#fff" stroke="#7a7a7a" stroke-width="1"/><text x="114.9" y="377.9" font-size="11" letter-spacing="0.3" fill="#000">TSM</text><path d="M219,373 L223.0,377 L227,373" fill="none" stroke="#444" stroke-width="1.1"/>
<text x="27.3" y="408" font-size="13" font-weight="700" fill="#000">Time series</text>
<text x="34.7" y="435.7" font-size="11" letter-spacing="0.1" fill="#000">Name:</text>
<rect x="111.5" y="422.5" width="510" height="20" fill="#fff" stroke="#7a7a7a" stroke-width="1"/><text x="114.5" y="436.4" font-size="10.4" letter-spacing="0" fill="#000">[Multiple time series selected]</text><path d="M609.3,431 L613.3,435 L617.3,431" fill="none" stroke="#444" stroke-width="1.1"/>
<text x="34.7" y="467" font-size="11" letter-spacing="0.5" fill="#000">Parameters</text>
<circle cx="119" cy="463" r="7.6" fill="none" stroke="#666" stroke-width="1.1"/>
<path d="M115.5,461 L119,464.8 L122.5,461" fill="none" stroke="#222" stroke-width="2"/>
<text x="27.6" y="499.9" font-size="13" font-weight="700" fill="#000">Attribute aggregate of time series</text>
<text x="34.7" y="534.4" font-size="11" letter-spacing="0.33" fill="#000">Category:</text>
<rect x="112.5" y="520.5" width="508" height="20" fill="#fff" stroke="#2f6da5" stroke-width="1"/><path d="M608,528.5 L612.0,532.5 L616,528.5" fill="none" stroke="#444" stroke-width="1.1"/>
<rect x="115" y="523" width="1" height="13" fill="#000"/>
<rect x="633.5" y="421.5" width="94" height="24" fill="#fff" stroke="#000" stroke-width="1"/><line x1="641" y1="440" x2="645" y2="436" stroke="#7c6458" stroke-width="4" stroke-linecap="round"/><line x1="640.6" y1="439.6" x2="644.6" y2="435.6" stroke="#e8965e" stroke-width="2.6" stroke-linecap="round"/><circle cx="649.5" cy="431.2" r="5.0" fill="#cdeaf8" stroke="#6c7f90" stroke-width="1.1"/><circle cx="648.7" cy="430.4" r="2.5" fill="#e6f7ff"/><text x="661" y="437.8" font-size="11" letter-spacing="0.2">Search...</text>
<rect x="633.5" y="453.5" width="94" height="24" fill="#fff" stroke="#555" stroke-width="1"/><rect x="639.5" y="459.5" width="13" height="12" fill="#a6b3c8" stroke="#6a7b9c" stroke-width="1"/><rect x="640" y="460" width="12" height="2" fill="#4a7fdc"/><rect x="640.0" y="462.6" width="3.4" height="2.3" fill="#f7f9fc"/><rect x="644.1" y="462.6" width="3.4" height="2.3" fill="#f7f9fc"/><rect x="648.2" y="462.6" width="3.4" height="2.3" fill="#f7f9fc"/><rect x="640.0" y="465.7" width="3.4" height="2.3" fill="#f7f9fc"/><rect x="644.1" y="465.7" width="3.4" height="2.3" fill="#f7f9fc"/><rect x="648.2" y="465.7" width="3.4" height="2.3" fill="#e4eaf2"/><rect x="640.0" y="468.8" width="3.4" height="2.3" fill="#f7f9fc"/><rect x="644.1" y="468.8" width="3.4" height="2.3" fill="#e4eaf2"/><rect x="648.2" y="468.8" width="3.4" height="2.3" fill="#e4eaf2"/><text x="665" y="468.8" font-size="11" letter-spacing="0.4">Open</text><path d="M716,464 L721,464 L718.5,467 Z" fill="#000"/>
<rect x="633.5" y="520.5" width="94" height="24" fill="#fff" stroke="#000" stroke-width="1"/><line x1="641" y1="539" x2="645" y2="535" stroke="#7c6458" stroke-width="4" stroke-linecap="round"/><line x1="640.6" y1="538.6" x2="644.6" y2="534.6" stroke="#e8965e" stroke-width="2.6" stroke-linecap="round"/><circle cx="649.5" cy="530.2" r="5.0" fill="#cdeaf8" stroke="#6c7f90" stroke-width="1.1"/><circle cx="648.7" cy="529.4000000000001" r="2.5" fill="#e6f7ff"/><text x="661" y="536.8" font-size="11" letter-spacing="0.2">Search...</text>
<rect x="633.5" y="551.5" width="94" height="24" fill="#fff" stroke="#555" stroke-width="1"/><rect x="639.5" y="557.5" width="13" height="12" fill="#a6b3c8" stroke="#6a7b9c" stroke-width="1"/><rect x="640" y="558" width="12" height="2" fill="#4a7fdc"/><rect x="640.0" y="560.6" width="3.4" height="2.3" fill="#f7f9fc"/><rect x="644.1" y="560.6" width="3.4" height="2.3" fill="#f7f9fc"/><rect x="648.2" y="560.6" width="3.4" height="2.3" fill="#f7f9fc"/><rect x="640.0" y="563.7" width="3.4" height="2.3" fill="#f7f9fc"/><rect x="644.1" y="563.7" width="3.4" height="2.3" fill="#f7f9fc"/><rect x="648.2" y="563.7" width="3.4" height="2.3" fill="#e4eaf2"/><rect x="640.0" y="566.8" width="3.4" height="2.3" fill="#f7f9fc"/><rect x="644.1" y="566.8" width="3.4" height="2.3" fill="#e4eaf2"/><rect x="648.2" y="566.8" width="3.4" height="2.3" fill="#e4eaf2"/><text x="665" y="566.8" font-size="11" letter-spacing="0.4">Open</text><path d="M716,562 L721,562 L718.5,565 Z" fill="#000"/>
</svg>
</body></html>
